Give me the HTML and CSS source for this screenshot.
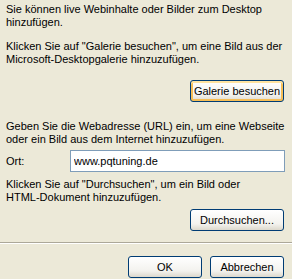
FILE: index.html
```html
<!DOCTYPE html>
<html lang="de">
<head>
  <meta charset="UTF-8">
  <title>Webinhalte</title>
  <link rel="stylesheet" href="styles.css">
</head>
<body>

  <div class="content">
    <p class="intro">Sie können live Webinhalte oder Bilder zum Desktop<br>hinzufügen.</p>
    <p>Klicken Sie auf "Galerie besuchen", um eine Bild aus der<br>Microsoft-Desktopgalerie hinzuzufügen.</p>

    <div class="actions">
      <button class="btn btn-wide btn-hot">Galerie besuchen</button>
    </div>

    <p class="url-text">Geben Sie die Webadresse (URL) ein, um eine Webseite<br>oder ein Bild aus dem Internet hinzuzufügen.</p>

    <div class="field">
      <label for="ort">Ort:</label>
      <input type="text" id="ort" value="www.pqtuning.de">
    </div>

    <p class="browse-text">Klicken Sie auf "Durchsuchen", um ein Bild oder<br>HTML-Dokument hinzuzufügen.</p>

    <div class="actions browse">
      <button class="btn btn-wide">Durchsuchen...</button>
    </div>
  </div>

  <div class="separator"></div>

  <div class="footer">
    <button class="btn">OK</button>
    <button class="btn">Abbrechen</button>
  </div>

</body>
</html>
```

FILE: styles.css
```css
body {
  margin: 0;
  background-color: #ece9d8;
  font-family: "Liberation Sans", Arial, sans-serif;
  font-size: 11px;
  line-height: 13px;
  color: #000;
  width: 292px;
  height: 279px;
  overflow: hidden;
}
.content {
  padding: 3px 7px 0 6px;
}
p {
  margin: 0;
}
.intro {
  margin-bottom: 11px;
}
.actions {
  display: flex;
  justify-content: flex-end;
  padding-right: 1px;
  margin-top: 14px;
}
.url-text {
  margin-top: 18px;
}
.field {
  display: flex;
  align-items: center;
  margin-top: 4px;
}
.field label {
  width: 64px;
}
.field input {
  flex: 1;
  height: 22px;
  box-sizing: border-box;
  border: 1px solid #7f9db9;
  background: #fff;
  font-family: inherit;
  font-size: 11px;
  padding: 0 3px;
  margin: 0;
  outline: none;
}
.browse-text {
  margin-top: 6px;
}
.actions.browse {
  margin-top: 5px;
}
.separator {
  margin-top: 11px;
  border-top: 1px solid #aca899;
  border-bottom: 1px solid #fff;
}
.footer {
  display: flex;
  justify-content: flex-end;
  gap: 8px;
  padding: 12px 8px 0 0;
}
.btn {
  width: 74px;
  height: 22px;
  box-sizing: border-box;
  border: 1px solid #003c74;
  border-radius: 3px;
  background: linear-gradient(#ffffff, #f3f2ee 70%, #dcd8cc);
  font-family: inherit;
  font-size: 11px;
  color: #000;
  padding: 0;
  margin: 0;
}
.btn-wide {
  width: 94px;
}
.btn-hot {
  box-shadow: inset 0 2px 0 #ffe3a0, inset 0 0 0 2px #f6be56, inset 0 -2px 0 #e5a01a;
}
```
